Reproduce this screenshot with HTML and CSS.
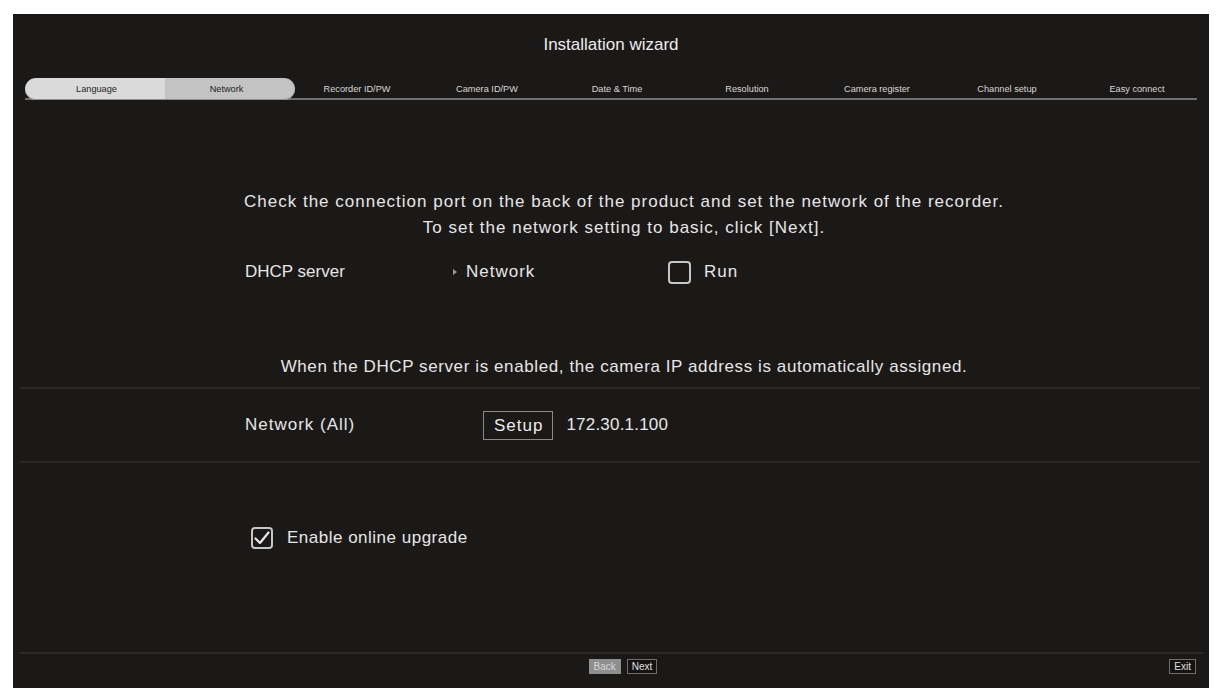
FILE: index.html
```html
<!DOCTYPE html>
<html>
<head>
<meta charset="utf-8">
<title>Installation wizard</title>
<link rel="stylesheet" href="styles.css">
</head>
<body>
<div class="panel">
  <div class="title">Installation wizard</div>
  <div class="tabs">
    <div class="tab tab-done">Language</div>
    <div class="tab tab-current">Network</div>
    <div class="tab">Recorder ID/PW</div>
    <div class="tab">Camera ID/PW</div>
    <div class="tab">Date &amp; Time</div>
    <div class="tab">Resolution</div>
    <div class="tab">Camera register</div>
    <div class="tab">Channel setup</div>
    <div class="tab">Easy connect</div>
  </div>

  <div class="intro">
    <p>Check the connection port on the back of the product and set the network of the recorder.</p>
    <p>To set the network setting to basic, click [Next].</p>
  </div>

  <div class="row dhcp">
    <span class="label label-dhcp">DHCP server</span>
    <span class="link"><span class="arrow"></span>Network</span>
    <span class="check"></span>
    <span class="check-text">Run</span>
  </div>

  <div class="note">When the DHCP server is enabled, the camera IP address is automatically assigned.</div>

  <div class="section">
    <div class="row net">
      <span class="label label-net">Network (All)</span>
      <span class="setup">Setup</span>
      <span class="ip">172.30.1.100</span>
    </div>
  </div>

  <div class="row upgrade">
    <span class="check checked">
      <svg viewBox="0 0 22 22" width="22" height="22"><path d="M4.5 11.5 L9 16 L17.5 5.5" fill="none" stroke="#e8e8e8" stroke-width="2.2" stroke-linecap="round" stroke-linejoin="round"/></svg>
    </span>
    <span class="check-text">Enable online upgrade</span>
  </div>

  <div class="footer">
    <div class="spacer"></div>
    <div class="nav">
      <span class="btn btn-back">Back</span>
      <span class="btn">Next</span>
    </div>
    <div class="exit-wrap"><span class="btn">Exit</span></div>
  </div>
</div>
</body>
</html>
```

FILE: styles.css
```css
* { box-sizing: border-box; }

html, body {
  margin: 0;
  padding: 0;
  background: #ffffff;
}

body {
  padding: 14px 0 0 13px;
  font-family: "Liberation Sans", Arial, sans-serif;
}

.panel {
  width: 1196px;
  height: 674px;
  background: #1a1917;
  color: #e6e6e6;
  display: flex;
  flex-direction: column;
}

.title {
  padding-top: 22px;
  height: 40px;
  line-height: 18px;
  font-size: 17px;
  text-align: center;
  color: #ececec;
}

.tabs {
  margin: 24px 0 0 12px;
  width: 1172px;
  height: 22px;
  border-bottom: 2px solid #6f6f6f;
  display: flex;
}

.tab {
  flex: 0 0 130px;
  height: 22px;
  line-height: 22px;
  font-size: 9.2px;
  text-align: center;
  color: #d8d8d8;
  padding-right: 6px;
}

.tab-done {
  flex-basis: 140px;
  padding-left: 3px;
  padding-right: 0;
  background: #dadada;
  color: #1e1e1e;
  border-radius: 11px 0 0 11px;
  box-shadow: inset 0 -1px 0 #8d8d8d;
}

.tab-current {
  padding-right: 7px;
  background: #c3c3c3;
  color: #1e1e1e;
  border-radius: 0 11px 11px 0;
  box-shadow: inset 0 -1px 0 #8d8d8d;
}

.intro {
  margin-top: 89px;
  padding-left: 26px;
  text-align: center;
  font-size: 17px;
  line-height: 26px;
  letter-spacing: 1px;
}

.intro p { margin: 0; }

.row {
  display: flex;
  align-items: center;
  height: 30px;
  font-size: 17px;
  padding-left: 232px;
  letter-spacing: 1px;
}

.dhcp { margin-top: 16px; }

.label-dhcp { width: 208px; letter-spacing: 0; }

.link {
  display: flex;
  align-items: center;
  width: 215px;
}

.arrow {
  width: 0;
  height: 0;
  border-left: 4px solid #9a9a9a;
  border-top: 3px solid transparent;
  border-bottom: 3px solid transparent;
  margin-right: 9px;
}

.check {
  width: 23px;
  height: 23px;
  border: 2px solid #c6c6c6;
  border-radius: 4px;
  display: flex;
  align-items: center;
  justify-content: center;
  flex: none;
}

.check-text { margin-left: 13px; }

.note {
  margin-top: 67px;
  padding-left: 26px;
  text-align: center;
  font-size: 17px;
  line-height: 26px;
  letter-spacing: 0.6px;
}

.section {
  margin: 7px 9px 0 7px;
  border-top: 2px solid #292826;
  border-bottom: 2px solid #292826;
  height: 76px;
  display: flex;
  align-items: center;
}

.section .row { padding-left: 225px; }

.label-net { width: 238px; }

.setup {
  height: 29px;
  line-height: 27px;
  padding: 0 9px 0 10px;
  border: 1px solid #8a8a8a;
  color: #ececec;
}

.ip { margin-left: 13px; letter-spacing: 0.2px; }

.upgrade {
  margin-top: 60px;
  padding-left: 238px;
  letter-spacing: 0.5px;
}

.upgrade .check {
  width: 22px;
  height: 22px;
}

.upgrade .check svg { display: block; margin: -2px; }

.upgrade .check-text { margin-left: 14px; }

.footer {
  margin: auto 6px 0 7px;
  height: 36px;
  border-top: 2px solid #2c2b29;
  padding: 5px 7px 0 30px;
  display: grid;
  grid-template-columns: 1fr auto 1fr;
  align-items: start;
}

.nav { display: flex; gap: 6px; }

.exit-wrap { display: flex; justify-content: flex-end; }

.btn {
  display: block;
  height: 15px;
  line-height: 13px;
  padding: 0 4px;
  font-size: 10px;
  border: 1px solid #6e6e6e;
  background: #141312;
  color: #e0e0e0;
}

.btn-back {
  background: #8e8e8e;
  border-color: #8e8e8e;
  color: #d6d6d6;
}
```
